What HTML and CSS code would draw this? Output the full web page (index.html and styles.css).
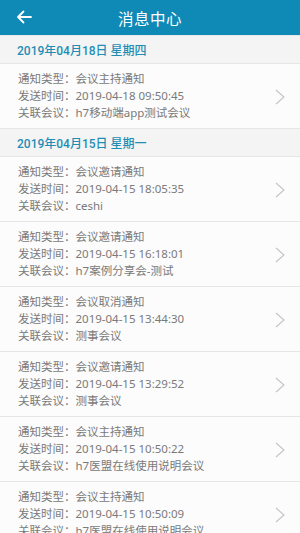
FILE: index.html
```html
<!DOCTYPE html>
<html lang="zh">
<head>
<meta charset="utf-8">
<link rel="stylesheet" href="styles.css">
</head>
<body>
<div class="app">
  <header class="topbar">
    <svg class="back" width="16" height="14" viewBox="0 0 16 14"><path d="M15 7H2M7.5 1.5L2 7l5.5 5.5" fill="none" stroke="#fff" stroke-width="1.8" stroke-linecap="round" stroke-linejoin="round"/></svg>
    <h1 class="title">消息中心</h1>
  </header>
  <main class="list">
    <div class="date">2019年04月18日 星期四</div>
    <div class="item">
      <div class="lines">
        <p>通知类型：会议主持通知</p>
        <p>发送时间：2019-04-18 09:50:45</p>
        <p>关联会议：h7移动端app测试会议</p>
      </div>
      <svg class="chev" width="10" height="16" viewBox="0 0 10 16"><path d="M1 1l8 7-8 7" fill="none" stroke="#c4c4c4" stroke-width="1.1"/></svg>
    </div>
    <div class="date">2019年04月15日 星期一</div>
    <div class="item">
      <div class="lines">
        <p>通知类型：会议邀请通知</p>
        <p>发送时间：2019-04-15 18:05:35</p>
        <p>关联会议：ceshi</p>
      </div>
      <svg class="chev" width="10" height="16" viewBox="0 0 10 16"><path d="M1 1l8 7-8 7" fill="none" stroke="#c4c4c4" stroke-width="1.1"/></svg>
    </div>
    <div class="item">
      <div class="lines">
        <p>通知类型：会议邀请通知</p>
        <p>发送时间：2019-04-15 16:18:01</p>
        <p>关联会议：h7案例分享会-测试</p>
      </div>
      <svg class="chev" width="10" height="16" viewBox="0 0 10 16"><path d="M1 1l8 7-8 7" fill="none" stroke="#c4c4c4" stroke-width="1.1"/></svg>
    </div>
    <div class="item">
      <div class="lines">
        <p>通知类型：会议取消通知</p>
        <p>发送时间：2019-04-15 13:44:30</p>
        <p>关联会议：测事会议</p>
      </div>
      <svg class="chev" width="10" height="16" viewBox="0 0 10 16"><path d="M1 1l8 7-8 7" fill="none" stroke="#c4c4c4" stroke-width="1.1"/></svg>
    </div>
    <div class="item">
      <div class="lines">
        <p>通知类型：会议邀请通知</p>
        <p>发送时间：2019-04-15 13:29:52</p>
        <p>关联会议：测事会议</p>
      </div>
      <svg class="chev" width="10" height="16" viewBox="0 0 10 16"><path d="M1 1l8 7-8 7" fill="none" stroke="#c4c4c4" stroke-width="1.1"/></svg>
    </div>
    <div class="item">
      <div class="lines">
        <p>通知类型：会议主持通知</p>
        <p>发送时间：2019-04-15 10:50:22</p>
        <p>关联会议：h7医盟在线使用说明会议</p>
      </div>
      <svg class="chev" width="10" height="16" viewBox="0 0 10 16"><path d="M1 1l8 7-8 7" fill="none" stroke="#c4c4c4" stroke-width="1.1"/></svg>
    </div>
    <div class="item">
      <div class="lines">
        <p>通知类型：会议主持通知</p>
        <p>发送时间：2019-04-15 10:50:09</p>
        <p>关联会议：h7医盟在线使用说明会议</p>
      </div>
      <svg class="chev" width="10" height="16" viewBox="0 0 10 16"><path d="M1 1l8 7-8 7" fill="none" stroke="#c4c4c4" stroke-width="1.1"/></svg>
    </div>
  </main>
</div>
</body>
</html>
```
FILE: styles.css
```css
* { box-sizing: border-box; }
html, body { margin: 0; padding: 0; }
body {
  width: 300px;
  height: 533px;
  overflow: hidden;
  background: #fcfcfc;
  font-family: Roboto, "Noto Sans CJK SC", sans-serif;
}
.app { display: flex; flex-direction: column; }
.topbar {
  height: 36px;
  background: #0f89b6;
  display: flex;
  align-items: center;
  justify-content: center;
  position: relative;
  border-bottom: 1px solid #e8e8e8;
}
.back { position: absolute; left: 16px; top: 10px; }
.title {
  margin: 0;
  color: #fff;
  font-size: 15.5px;
  font-weight: normal;
  letter-spacing: 0.5px;
}
.list { display: flex; flex-direction: column; }
.date {
  height: 28px;
  display: flex;
  align-items: center;
  padding-left: 17px;
  background: #f4f4f4;
  border-bottom: 1px solid #e6e6e6;
  color: #1f8db4;
  font-size: 12px;
  font-weight: 500;
}
.item {
  height: 65px;
  display: flex;
  align-items: center;
  justify-content: space-between;
  padding: 1px 15px 0 18px;
  background: #fcfcfc;
  border-bottom: 1px solid #e6e6e6;
}
.lines p {
  margin: 0;
  line-height: 16.7px;
  font-family: "Noto Sans", "Noto Sans CJK SC", sans-serif;
  font-size: 11.5px;
  color: #7a7a7a;
}
.chev { flex: none; }
```
